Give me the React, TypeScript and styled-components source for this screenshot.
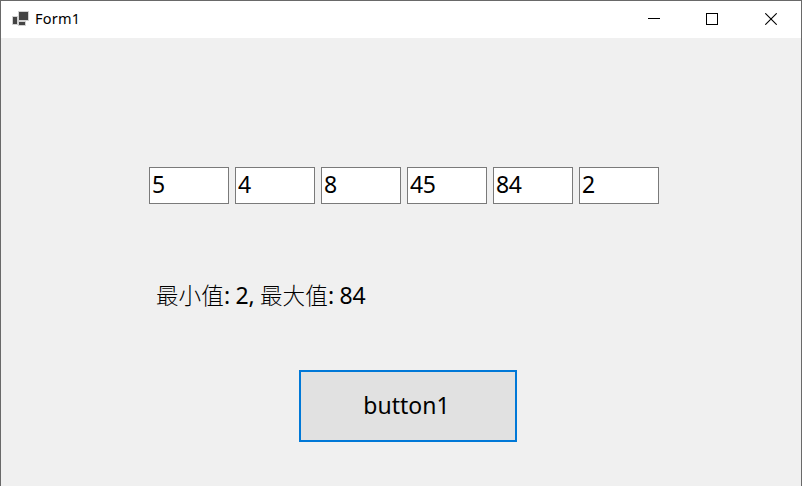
import React, { useState } from "react";
import styled, { createGlobalStyle } from "styled-components";

const GlobalStyle = createGlobalStyle`
  * { box-sizing: border-box; }
  body { margin: 0; overflow: hidden; }
`;

const Window = styled.div`
  display: flex;
  flex-direction: column;
  width: 802px;
  height: 486px;
  border: 1px solid #696969;
  border-bottom: 0;
  background: #f0f0f0;
  color: #000;
  font-family: "Noto Sans", "Noto Sans CJK TC", sans-serif;
  font-size: 23px;
`;

const TitleBar = styled.header`
  display: flex;
  flex: none;
  height: 37px;
  background: #fff;
`;

const AppIcon = styled.svg`
  flex: none;
  margin: 9px 0 0 10px;
`;

const Title = styled.span`
  flex: 1;
  margin-left: 6px;
  font-size: 14.5px;
  line-height: 35px;
  letter-spacing: 0.2px;
`;

const CaptionButton = styled.button<{ $width?: number }>`
  display: flex;
  align-items: center;
  justify-content: center;
  width: ${(p) => p.$width ?? 58}px;
  height: 36px;
  padding: 0;
  border: 0;
  background: transparent;
`;

const Form = styled.main`
  display: flex;
  flex-direction: column;
  align-items: flex-start;
`;

const Fields = styled.div`
  display: flex;
  gap: 6px;
  margin: 129px 0 0 148px;
`;

const Field = styled.input`
  width: 80px;
  height: 37px;
  padding: 0 2px 3px;
  border: 1px solid #7a7a7a;
  border-radius: 0;
  background: #fff;
  color: #000;
  font: inherit;
  letter-spacing: -0.3px;
  outline: none;
`;

const Result = styled.p`
  display: flex;
  margin: 75px 0 0 155px;
  height: 32px;
  line-height: 32px;
  white-space: pre;
`;

const Caption = styled.span<{ $width: number }>`
  width: ${(p) => p.$width}px;
  font-family: "Noto Sans CJK TC", sans-serif;
  font-weight: 300;
  font-size: 22.6px;
`;

const Value = styled.span<{ $width?: number }>`
  width: ${(p) => (p.$width ? `${p.$width}px` : "auto")};
  letter-spacing: -0.3px;
`;

const ActionButton = styled.button`
  width: 218px;
  height: 72px;
  margin: 59px 0 0 298px;
  padding: 0 3px 2px 0;
  border: 2px solid #0078d7;
  background: #e1e1e1;
  color: #000;
  font: inherit;
`;

export default function App() {
  const [values, setValues] = useState(["5", "4", "8", "45", "84", "2"]);
  const [range, setRange] = useState({ min: 2, max: 84 });

  const edit = (index: number, value: string) =>
    setValues(values.map((v, i) => (i === index ? value : v)));

  const calculate = () => {
    const numbers = values.map(Number);
    setRange({ min: Math.min(...numbers), max: Math.max(...numbers) });
  };

  return (
    <>
      <GlobalStyle />
      <Window>
        <TitleBar>
          <AppIcon width="18" height="18" viewBox="0 0 18 18" shapeRendering="crispEdges">
            <path d="M7 1h11v10H7zM1 6h6v9H1zM7 11h8v5H7z" fill="#d2d2d2" />
            <path d="M8 2h9v8H8zM2 7h4v7H2zM8 12h6v3H8z" fill="#444" />
          </AppIcon>
          <Title>Form1</Title>
          <CaptionButton aria-label="Minimize">
            <svg width="12" height="12" shapeRendering="crispEdges">
              <path d="M0 5.5h12" stroke="#000" />
            </svg>
          </CaptionButton>
          <CaptionButton aria-label="Maximize">
            <svg width="12" height="12" shapeRendering="crispEdges">
              <path d="M.5.5h11v11H.5z" stroke="#000" fill="none" />
            </svg>
          </CaptionButton>
          <CaptionButton aria-label="Close" $width={60}>
            <svg width="12" height="12">
              <path d="M.3.3l11.4 11.4M11.7.3L.3 11.7" stroke="#000" strokeWidth="1.1" />
            </svg>
          </CaptionButton>
        </TitleBar>
        <Form>
          <Fields>
            {values.map((value, i) => (
              <Field key={i} value={value} onChange={(e) => edit(i, e.target.value)} />
            ))}
          </Fields>
          <Result>
            <Caption $width={68}>最小值</Caption>
            <Value $width={36}>: {range.min}, </Value>
            <Caption $width={68}>最大值</Caption>
            <Value>: {range.max}</Value>
          </Result>
          <ActionButton onClick={calculate}>button1</ActionButton>
        </Form>
      </Window>
    </>
  );
}
